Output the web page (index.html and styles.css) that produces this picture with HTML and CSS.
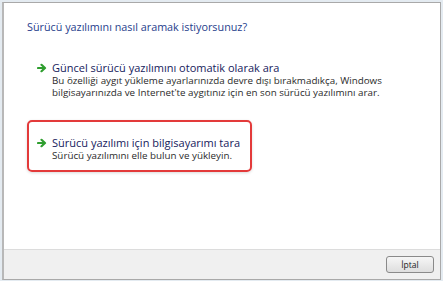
FILE: index.html
```html
<!DOCTYPE html>
<html lang="tr">
<head>
  <meta charset="UTF-8">
  <title>Sürücü Yazılımını Güncelleştir</title>
  <link rel="stylesheet" href="styles.css">
</head>
<body>
  <div class="window">
    <div class="content">
      <h1 class="heading">Sürücü yazılımını nasıl aramak istiyorsunuz?</h1>
      <div class="option">
        <svg class="arrow" width="10" height="10" viewBox="0 0 10 10"><path d="M1 5h6M4.5 1.8L8 5 4.5 8.2" fill="none" stroke="#2f9e2f" stroke-width="2.2" stroke-linecap="round" stroke-linejoin="round"/></svg>
        <div class="text">
          <div class="option-title">Güncel sürücü yazılımını otomatik olarak ara</div>
          <div class="option-desc">Bu özelliği aygıt yükleme ayarlarınızda devre dışı bırakmadıkça, Windows<br>bilgisayarınızda ve Internet'te aygıtınız için en son sürücü yazılımını arar.</div>
        </div>
      </div>
      <div class="option selected">
        <svg class="arrow" width="10" height="10" viewBox="0 0 10 10"><path d="M1 5h6M4.5 1.8L8 5 4.5 8.2" fill="none" stroke="#2f9e2f" stroke-width="2.2" stroke-linecap="round" stroke-linejoin="round"/></svg>
        <div class="text">
          <div class="option-title">Sürücü yazılımı için bilgisayarımı tara</div>
          <div class="option-desc">Sürücü yazılımını elle bulun ve yükleyin.</div>
        </div>
      </div>
    </div>
    <div class="footer">
      <button class="btn">İptal</button>
    </div>
  </div>
</body>
</html>
```

FILE: styles.css
```css
* { box-sizing:border-box; margin:0; padding:0; }
html, body { height:100%; }
body {
  background:#e4ebf1; padding:2px 2px 1px 2px;
  font-family:"Open Sans","Noto Sans",sans-serif; color:#1e1e1e;
}
.window {
  height:100%; display:flex; flex-direction:column;
  border:1px solid #a9a9a9; border-left:2px solid #b8b8b8;
}
.content { flex:1; background:#fff; padding:16px 0 0 23px; }
.heading { font-size:10.8px; font-weight:400; color:#263d8c; line-height:16px; margin-bottom:23px; }
.option { display:flex; align-items:flex-start; width:225px; padding:0 8px; border:2px solid transparent; border-radius:5px; }
.option + .option { margin-top:19px; }
.option.selected { border-color:#e33a3a; padding:13px 8px 8px; box-shadow:0 1px 3px rgba(0,0,0,.15); }
.arrow { flex:none; margin:3px 5px 0 0; }
.option-title { font-size:11px; color:#16215c; line-height:15px; white-space:nowrap; }
.option-desc { font-size:9.8px; color:#2a2a2a; line-height:12px; white-space:nowrap; }
.footer {
  height:30px; background:#f0f0f0; border-top:1px solid #dcdcdc;
  display:flex; justify-content:flex-end; align-items:center; padding-right:6px;
}
.btn {
  width:48px; height:17px; font-family:inherit; font-size:8.5px; color:#222;
  border:1px solid #8a8a8a; border-radius:3px;
  background:linear-gradient(#f6f6f6,#dedede);
}
```
